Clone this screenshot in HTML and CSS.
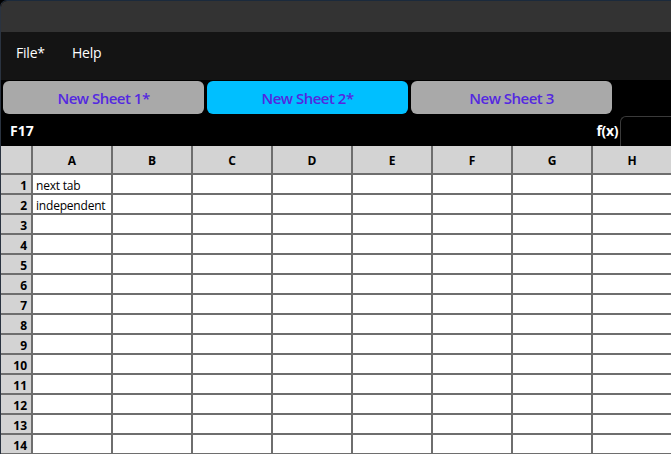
FILE: index.html
```html
<!DOCTYPE html>
<html>
<head>
<meta charset="utf-8">
<link rel="stylesheet" href="styles.css">
</head>
<body>
<div class="window">
  <div class="titlebar"></div>
  <div class="menubar">
    <span class="menu-item">File*</span>
    <span class="menu-item">Help</span>
  </div>
  <div class="tabstrip">
    <div class="tab">New Sheet 1*</div>
    <div class="tab active">New Sheet 2*</div>
    <div class="tab">New Sheet 3</div>
  </div>
  <div class="formulabar">
    <span class="cellref">F17</span>
    <span class="fx">f(x)</span>
    <div class="fx-input"></div>
  </div>
  <div class="sheet" id="sheet"></div>
</div>
<script>
  var sheet = document.getElementById('sheet');
  var cols = ['A','B','C','D','E','F','G','H'];
  var data = {1: 'next tab', 2: 'independent'};
  var html = '<div class="corner"></div>';
  cols.forEach(function (c) { html += '<div class="colhead">' + c + '</div>'; });
  for (var r = 1; r <= 14; r++) {
    html += '<div class="rowhead">' + r + '</div>';
    cols.forEach(function (c, i) {
      html += '<div class="cell">' + (i === 0 && data[r] ? data[r] : '') + '</div>';
    });
  }
  sheet.innerHTML = html;
</script>
</body>
</html>
```

FILE: styles.css
```css
html, body {
  margin: 0;
  padding: 0;
  background: #000;
  overflow: hidden;
}

.window {
  width: 671px;
  height: 454px;
  border-left: 1px solid #2a3340;
  border-top: 1px solid #1b2a3c;
  border-top-left-radius: 7px;
  box-sizing: border-box;
  overflow: hidden;
  background: #000;
  font-family: "Noto Sans", "Open Sans", sans-serif;
}

.titlebar {
  height: 31px;
  background: #333333;
}

.menubar {
  height: 48px;
  background: #141414;
  display: flex;
  align-items: center;
  gap: 27px;
  padding-left: 15px;
  padding-bottom: 8px;
  box-sizing: border-box;
}

.menu-item {
  color: #ffffff;
  font-family: "Open Sans", sans-serif;
  font-size: 14px;
  letter-spacing: -0.2px;
}

.tabstrip {
  height: 34px;
  display: flex;
  gap: 3px;
  padding: 1px 0 0 2px;
  box-sizing: border-box;
  background: #000;
}

.tab {
  width: 201px;
  height: 33px;
  border-radius: 6px;
  background: #a9a9a9;
  color: #5428e0;
  font-family: "Open Sans", sans-serif;
  font-weight: 600;
  font-size: 15px;
  letter-spacing: -0.5px;
  display: flex;
  align-items: center;
  justify-content: center;
}

.tab.active {
  background: #00bfff;
}

.formulabar {
  height: 32px;
  display: flex;
  align-items: center;
  background: #000;
  color: #fff;
  font-family: "Open Sans", sans-serif;
  font-weight: 700;
  font-size: 14px;
}

.cellref {
  margin-left: 9px;
  flex: 1;
}

.fx {
  margin-right: 2px;
  letter-spacing: -0.4px;
}

.fx-input {
  align-self: flex-end;
  width: 51px;
  height: 30px;
  border: 1px solid #3a3a3a;
  border-right: none;
  border-bottom: none;
  border-top-left-radius: 6px;
  box-sizing: border-box;
}

.sheet {
  display: grid;
  grid-template-columns: 30px repeat(8, 78px);
  grid-template-rows: 27px;
  grid-auto-rows: 18px;
  gap: 2px;
  background: #6e6e6e;
  padding-bottom: 2px;
  font-size: 12px;
  color: #000;
}

.corner,
.colhead,
.rowhead {
  background: #d3d3d3;
  font-family: "Open Sans", sans-serif;
  font-weight: 700;
  font-size: 12px;
  display: flex;
  align-items: center;
  padding-top: 1px;
}

.colhead {
  justify-content: center;
}

.rowhead {
  justify-content: flex-end;
  padding-right: 4px;
  padding-top: 2px;
}

.cell {
  background: #ffffff;
  display: flex;
  align-items: center;
  padding: 2px 0 0 3px;
  white-space: nowrap;
  font-family: "Open Sans", sans-serif;
  font-size: 12px;
  letter-spacing: -0.2px;
}
```
